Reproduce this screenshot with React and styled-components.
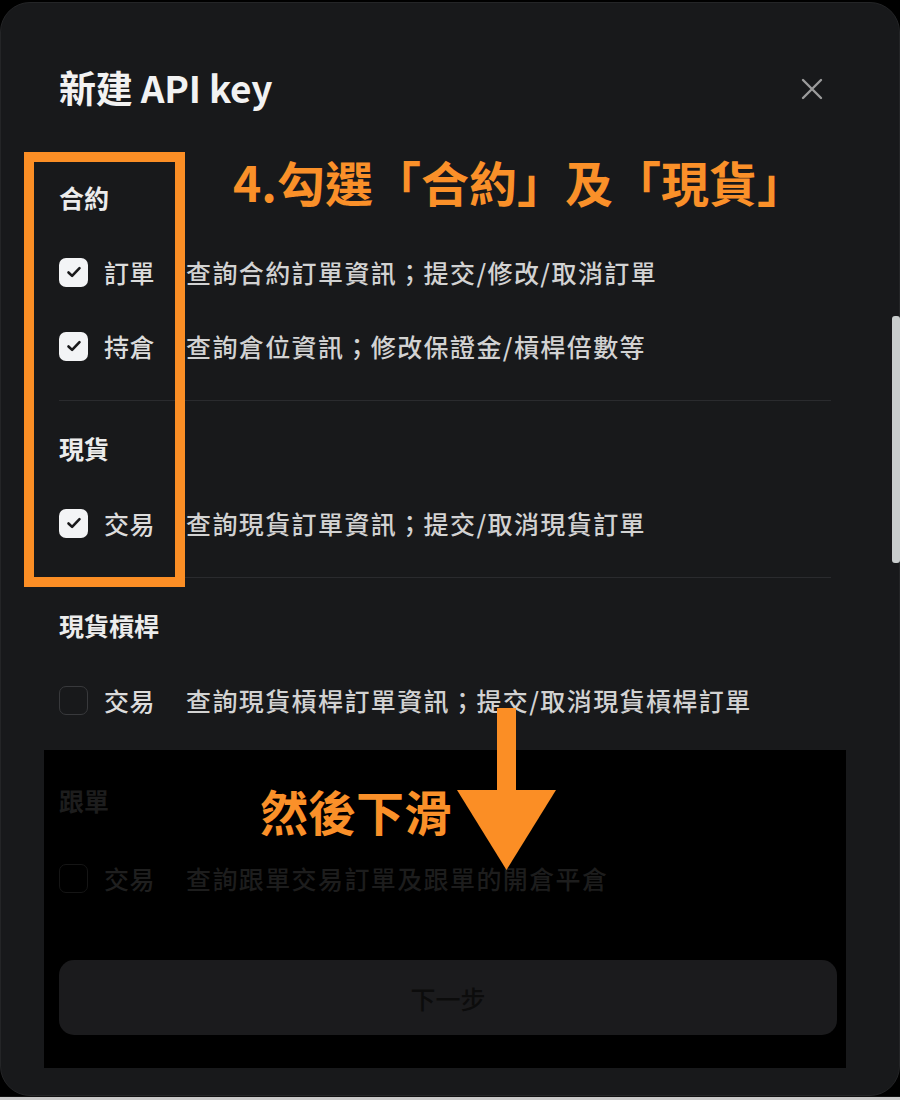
import React from "react";
import styled, { createGlobalStyle } from "styled-components";

const GlobalStyle = createGlobalStyle`
  html, body { margin: 0; padding: 0; background: #000; }
  body { font-family: "Noto Sans CJK TC", "Noto Sans", sans-serif; }
  * { box-sizing: border-box; }
`;

const Page = styled.div`
  position: relative;
  width: 900px;
  height: 1100px;
  background: #000;
  padding-top: 2px;
  overflow: hidden;
  display: flex;
  flex-direction: column;
`;

const Panel = styled.div`
  width: 900px;
  height: 1094px;
  background: #18191b;
  border: 1px solid #242527;
  border-radius: 30px;
  padding: 0 68px 0 58px;
  display: flex;
  flex-direction: column;
`;

const BottomEdge = styled.div`
  height: 4px;
  background: linear-gradient(#111 0 1px, #c9c9c9 1px);
`;

const Header = styled.header`
  display: flex;
  align-items: center;
  justify-content: space-between;
  padding-top: 64px;
  padding-bottom: 43px;
`;

const Title = styled.h1`
  margin: 0;
  font-size: 37px;
  line-height: 40px;
  font-weight: 700;
  color: #f2f2f2;
  letter-spacing: -0.2px;
`;

const CloseButton = styled.button`
  width: 22px;
  height: 22px;
  margin-right: 8px;
  margin-top: 4px;
  padding: 0;
  border: none;
  background: transparent;
  display: flex;
  align-items: center;
  justify-content: center;
`;

const Section = styled.section`
  padding: 32px 0 ${(p) => (p.$last ? 13 : 17)}px;
  border-bottom: ${(p) => (p.$last ? "none" : "1px solid #2a2b2e")};
`;

const SectionLabel = styled.div`
  font-size: 25px;
  line-height: 30px;
  font-weight: 700;
  color: ${(p) => (p.$dim ? "#1d1d1d" : "#ececec")};
  margin-bottom: ${(p) => (p.$dim ? 26 : 23)}px;
`;

const Row = styled.label`
  display: flex;
  align-items: center;
  height: 74px;
`;

const Box = styled.span`
  width: 29px;
  height: 29px;
  border-radius: 7px;
  flex: none;
  display: flex;
  align-items: center;
  justify-content: center;
  background: ${(p) => (p.$checked ? "#f3f4f6" : "transparent")};
  border: ${(p) =>
    p.$checked ? "none" : p.$dim ? "1.5px solid #151515" : "1.5px solid #38393c"};
`;

const ItemName = styled.span`
  width: 82px;
  margin-left: 16px;
  font-size: 25px;
  font-weight: 500;
  letter-spacing: 0.5px;
  color: ${(p) => (p.$dim ? "#1f1f1f" : "#dcdcdc")};
`;

const ItemDesc = styled.span`
  font-size: 25px;
  font-weight: 500;
  color: ${(p) => (p.$dim ? "#1d1d1d" : "#d2d2d2")};
  letter-spacing: 1.4px;
`;

const Dimmed = styled.div`
  margin: 0 -15px 0 -15px;
  background: #000;
  padding: 35px 9px 33px 15px;
`;

const NextButton = styled.button`
  width: 100%;
  height: 75px;
  margin-top: 45px;
  border: none;
  border-radius: 15px;
  background: #1b1b1d;
  color: #0c0c0c;
  font-family: "Noto Sans CJK TC", "Noto Sans", sans-serif;
  font-size: 25px;
  font-weight: 500;
`;

const Scrollbar = styled.div`
  position: absolute;
  left: 892px;
  top: 316px;
  width: 8px;
  height: 247px;
  border-radius: 3px;
  background: #c9cdcd;
`;

const HighlightBox = styled.div`
  position: absolute;
  left: 24px;
  top: 152px;
  width: 161px;
  height: 435px;
  border: 10px solid #fb8e25;
`;

const Note = styled.div`
  position: absolute;
  left: ${(p) => p.$x}px;
  top: ${(p) => p.$y}px;
  font-size: ${(p) => p.$size}px;
  line-height: 1;
  font-weight: 700;
  color: #fa9029;
  white-space: nowrap;
`;

const Arrow = styled.svg`
  position: absolute;
  left: 457px;
  top: 708px;
`;

const Check = () => (
  <svg width="18" height="18" viewBox="0 0 18 18">
    <path d="M3.5 9.5l3.6 3.4L14.5 5.2" fill="none" stroke="#1a1a1c" strokeWidth="2.6" strokeLinecap="round" strokeLinejoin="round" />
  </svg>
);

const Item = ({ checked, name, desc, dim }) => (
  <Row>
    <Box $checked={checked} $dim={dim}>{checked && <Check />}</Box>
    <ItemName $dim={dim}>{name}</ItemName>
    <ItemDesc $dim={dim}>{desc}</ItemDesc>
  </Row>
);

export default function App() {
  return (
    <>
      <GlobalStyle />
      <Page>
        <Panel>
          <Header>
            <Title>新建 API key</Title>
            <CloseButton aria-label="close">
              <svg width="22" height="22" viewBox="0 0 22 22">
                <path d="M2 2l18 18M20 2L2 20" stroke="#9b9b9b" strokeWidth="2.4" strokeLinecap="round" />
              </svg>
            </CloseButton>
          </Header>

          <Section>
            <SectionLabel>合約</SectionLabel>
            <Item checked name="訂單" desc="查詢合約訂單資訊；提交/修改/取消訂單" />
            <Item checked name="持倉" desc="查詢倉位資訊；修改保證金/槓桿倍數等" />
          </Section>

          <Section>
            <SectionLabel>現貨</SectionLabel>
            <Item checked name="交易" desc="查詢現貨訂單資訊；提交/取消現貨訂單" />
          </Section>

          <Section $last>
            <SectionLabel>現貨槓桿</SectionLabel>
            <Item name="交易" desc="查詢現貨槓桿訂單資訊；提交/取消現貨槓桿訂單" />
          </Section>

          <Dimmed>
            <SectionLabel $dim>跟單</SectionLabel>
            <Item dim name="交易" desc="查詢跟單交易訂單及跟單的開倉平倉" />
            <NextButton>下一步</NextButton>
          </Dimmed>
        </Panel>
        <BottomEdge />

        <Scrollbar />
        <HighlightBox />
        <Note $x={233} $y={157} $size={48}>4.勾選「合約」及「現貨」</Note>
        <Note $x={260} $y={786} $size={48}>然後下滑</Note>
        <Arrow width="100" height="164" viewBox="0 0 100 164">
          <rect x="40" y="0" width="19" height="84" fill="#fb8e25" />
          <polygon points="0,82 99,82 49.5,162" fill="#fb8e25" />
        </Arrow>
      </Page>
    </>
  );
}
